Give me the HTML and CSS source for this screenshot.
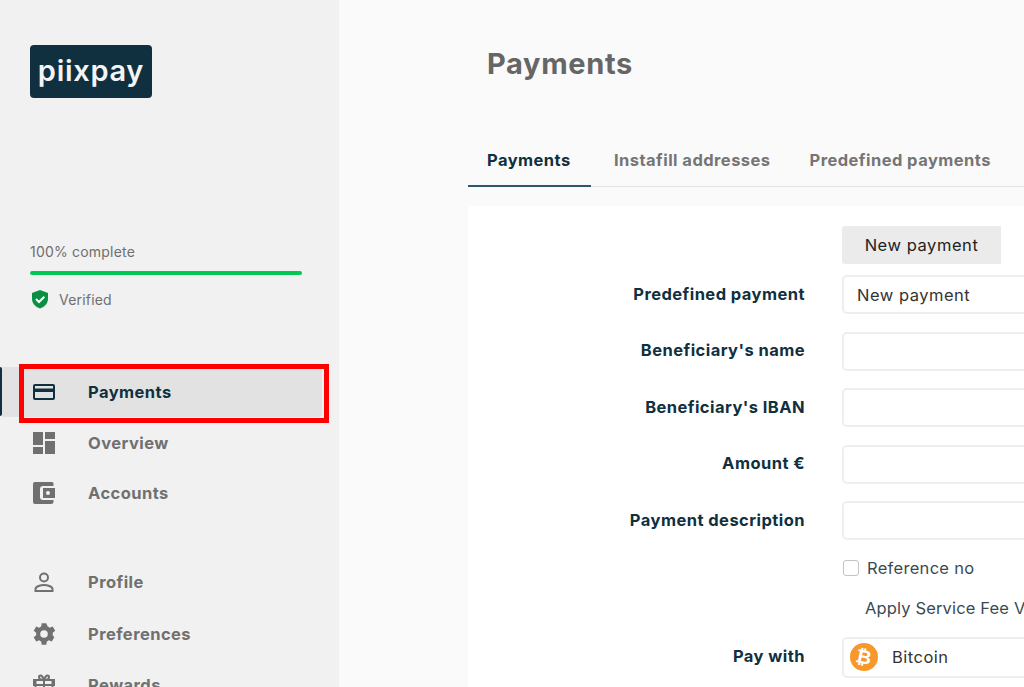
FILE: index.html
```html
<!DOCTYPE html>
<html lang="en">
<head>
<meta charset="utf-8">
<title>Payments</title>
<link rel="stylesheet" href="styles.css">
</head>
<body>
<div class="app">
  <aside class="sidebar">
    <div class="logo">piixpay</div>
    <div class="progress">
      <div class="progress-label">100% complete</div>
      <div class="progress-bar"></div>
      <div class="verified">
        <svg class="shield" viewBox="0 0 20 20"><path d="M10 1 2 4v5.500C2 14.300 5.400 18 10 19.500c4.600-1.500 8-5.200 8-10V4z" fill="#0b8f43"/><path d="M6 10l3 3 5.300-5.300" fill="none" stroke="#fff" stroke-width="2"/></svg>
        <span>Verified</span>
      </div>
    </div>
    <nav class="nav">
      <a class="nav-item active">
        <svg class="nav-icon" viewBox="0 0 24 24"><path d="M3 4h18a2 2 0 0 1 2 2v12a2 2 0 0 1-2 2H3a2 2 0 0 1-2-2V6a2 2 0 0 1 2-2zm0 2v2.500h18V6zm0 6v6h18v-6z" fill="#10303f"/></svg>
        <span>Payments</span>
      </a>
      <a class="nav-item">
        <svg class="nav-icon" viewBox="0 0 24 24"><path d="M1 1h10v13H1zM13 1h10v7H13zM13 10h10v13H13zM1 16h10v7H1z" fill="#707070"/></svg>
        <span>Overview</span>
      </a>
      <a class="nav-item">
        <svg class="nav-icon" viewBox="0 0 24 24"><path d="M3 1h17a1.500 1.500 0 0 1 1.500 1.500V5H11a3 3 0 0 0-3 3v8a3 3 0 0 0 3 3h10.500v1.500A2.500 2.500 0 0 1 19 23H3a2 2 0 0 1-2-2V3a2 2 0 0 1 2-2zm8 6h12v10H11zm5 3a2 2 0 1 0 0 4 2 2 0 0 0 0-4z" fill="#707070" fill-rule="evenodd"/></svg>
        <span>Accounts</span>
      </a>
      <a class="nav-item nav-low nav-gap">
        <svg class="nav-icon" viewBox="0 0 24 24"><circle cx="12" cy="7.500" r="4" fill="none" stroke="#707070" stroke-width="2"/><path d="M3.500 21v-2c0-2.600 5.500-4 8.500-4s8.500 1.400 8.500 4v2z" fill="none" stroke="#707070" stroke-width="2"/></svg>
        <span>Profile</span>
      </a>
      <a class="nav-item nav-low">
        <svg class="nav-icon" viewBox="0 0 24 24"><path d="M20.700 13.200a8 8 0 0 0 0-2.400l2.500-2-2.500-4.300-3 1.200a9 9 0 0 0-2-1.200L14.300 1.300H9.700l-.5 3.200a9 9 0 0 0-2 1.200l-3-1.200L1.700 8.800l2.500 2a8 8 0 0 0 0 2.400l-2.500 2 2.500 4.300 3-1.200a9 9 0 0 0 2 1.200l.5 3.200h4.600l.5-3.200a9 9 0 0 0 2-1.200l3 1.200 2.500-4.300zM12 15.800a3.800 3.800 0 1 1 0-7.600 3.800 3.800 0 0 1 0 7.600z" fill="#707070"/></svg>
        <span>Preferences</span>
      </a>
      <a class="nav-item nav-low">
        <svg class="nav-icon" viewBox="0 0 24 24"><path d="M2 7h20v5H2zM3.500 7v15h17V7M12 7v15M12 7C9 7 7 6 7 4s3-3 5 3c2-6 5-5 5-3s-2 3-5 3" fill="none" stroke="#707070" stroke-width="2"/></svg>
        <span>Rewards</span>
      </a>
    </nav>
    <div class="callout"></div>
  </aside>
  <main class="main">
    <h1 class="title">Payments</h1>
    <div class="tabs">
      <a class="tab active">Payments</a>
      <a class="tab tab-mid">Instafill addresses</a>
      <a class="tab">Predefined payments</a>
    </div>
    <section class="card">
      <div class="row row-button">
        <div class="label"></div>
        <button class="btn">New payment</button>
      </div>
      <div class="row"><div class="label">Predefined payment</div><div class="field">New payment</div></div>
      <div class="row"><div class="label">Beneficiary's name</div><div class="field"></div></div>
      <div class="row"><div class="label">Beneficiary's IBAN</div><div class="field"></div></div>
      <div class="row"><div class="label">Amount €</div><div class="field"></div></div>
      <div class="row"><div class="label">Payment description</div><div class="field"></div></div>
      <div class="row row-check"><div class="label"></div><label class="check"><span class="box"></span>Reference no</label></div>
      <div class="row row-voucher"><div class="label"></div><div class="voucher">Apply Service Fee Voucher</div></div>
      <div class="row row-pay"><div class="label">Pay with</div>
        <div class="field field-pay">
          <svg class="coin" viewBox="0 0 28 28"><circle cx="14" cy="14" r="14" fill="#f7982a"/><text x="14" y="20.500" text-anchor="middle" class="coin-b" transform="rotate(12 14 14)">₿</text></svg>
          <span>Bitcoin</span>
        </div>
      </div>
    </section>
  </main>
</div>
</body>
</html>
```
FILE: styles.css
```css
* { box-sizing: border-box; }
html, body { margin: 0; height: 100%; overflow: hidden; }
body { font-family: Inter, "Open Sans", sans-serif; color: #10303f; }
.app { display: flex; width: 1024px; height: 687px; overflow: hidden; }

.sidebar { position: relative; flex: 0 0 339px; height: 687px; background: #f1f1f1; padding-top: 45px; overflow: hidden; }
.logo { margin-left: 30px; width: 122px; height: 53px; background: #10303f; border-radius: 4px; color: #f4f4f4; font-size: 29px; font-weight: 600; line-height: 51px; text-align: center; letter-spacing: 0.700px; }
.progress { margin: 145px 0 0 30px; width: 272px; }
.progress-label { font-size: 14px; line-height: 18px; color: #6f6f6f; letter-spacing: 0.200px; }
.progress-bar { margin-top: 10px; height: 4px; border-radius: 2px; background: #00c853; }
.verified { display: flex; align-items: center; gap: 9px; margin-top: 14px; font-size: 14px; letter-spacing: 0.200px; color: #6f6f6f; height: 20px; }
.shield { width: 20px; height: 20px; }

.nav { margin-top: 58px; display: flex; flex-direction: column; }
.nav-item { display: flex; align-items: center; height: 50.500px; padding-left: 32px; font-size: 16.500px; letter-spacing: 0.450px; font-weight: 700; color: #707070; }
.nav-low { height: 51.500px; }
.nav-item span { margin-left: 32px; }
.nav-icon { width: 24px; height: 24px; flex: none; }
.nav-item.active { color: #10303f; margin-left: 2px; padding-left: 30px; background: #e2e2e2; border-radius: 0 4px 4px 0; width: 320px; height: 50px; margin-bottom: 0.500px; }
.nav-item.active::before { content: ""; position: absolute; left: 0; top: 367px; width: 2px; height: 49px; background: #10303f; border-radius: 0 3px 3px 0; }
.nav-gap { margin-top: 38px; }
.callout { position: absolute; left: 19px; top: 364px; width: 310px; height: 59px; border: 5px solid #ff0000; pointer-events: none; }

.main { flex: 1; min-width: 0; background: #fafafa; overflow: hidden; padding: 45px 0 0 129px; }
.title { margin: 0; font-size: 29px; letter-spacing: 0.650px; line-height: 38px; font-weight: 700; color: #666; margin-left: 19px; }
.tabs { display: flex; margin-top: 58px; height: 46px; border-bottom: 1px solid #e4e4e4; width: 700px; }
.tab { padding: 0 19px; font-size: 16.500px; letter-spacing: 0.450px; font-weight: 700; color: #757575; line-height: 38px; height: 46px; margin-right: 4px; }
.tab.active { color: #10303f; border-bottom: 2px solid #2f566b; min-width: 123px; }
.tab-mid { margin-right: 1px; }

.card { margin-top: 19px; width: 700px; background: #fff; border-radius: 5px 0 0 0; padding-top: 20px; height: 600px; }
.row { display: flex; align-items: center; height: 39px; margin-bottom: 17.500px; }
.label { flex: 0 0 337px; text-align: right; font-size: 16.500px; letter-spacing: 0.450px; font-weight: 700; color: #10303f; margin-right: 37px; padding-bottom: 2px; }
.row-button { height: 38px; margin-bottom: 11px; }
.btn { width: 159px; height: 38px; padding-bottom: 2px; border: 0; background: #ebebeb; border-radius: 3px 0 0 3px; font: 400 16.500px Inter, sans-serif; letter-spacing: 0.550px; color: #222; }
.field { width: 300px; height: 39px; border: 2px solid #eeeeee; border-radius: 5px; background: #fff; padding-left: 13px; font-size: 16.500px; letter-spacing: 0.500px; line-height: 37px; color: #333; }
.row-check { height: 20px; margin-top: 0; margin-bottom: 20px; }
.check { display: flex; align-items: center; font-size: 16.500px; letter-spacing: 0.300px; color: #3a4a52; margin-left: 1px; }
.box { width: 16px; height: 16px; border: 1px solid #c4c4c4; border-radius: 3px; margin-right: 8px; background: #fff; }
.row-voucher { height: 20px; margin-bottom: 19px; }
.voucher { margin-left: 23px; font-size: 16.500px; letter-spacing: 0.150px; white-space: nowrap; color: #3a4a52; }
.row-pay { height: 41px; }
.field-pay { height: 41px; padding-left: 6px; display: flex; align-items: center; gap: 14px; }
.coin { width: 28px; height: 28px; }
.coin-b { font: 700 19px "DejaVu Sans", sans-serif; fill: #fff; }
```
